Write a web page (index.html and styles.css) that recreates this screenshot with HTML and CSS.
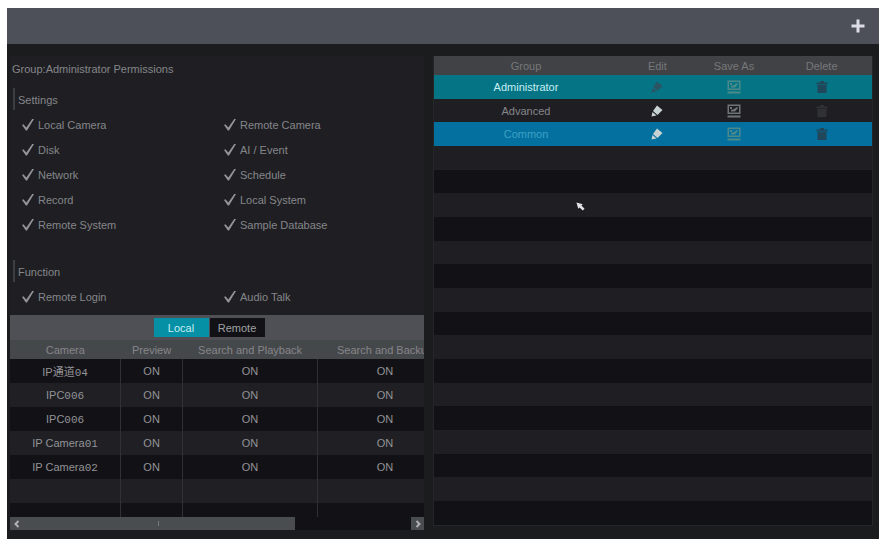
FILE: index.html
```html
<!DOCTYPE html>
<html lang="en">
<head>
    <meta charset="UTF-8">
    <meta name="viewport" content="width=device-width, initial-scale=1.0">
    <title>Permission Group</title>
    <link rel="stylesheet" href="styles.css">
</head>
<body>
    <svg class="sprite" aria-hidden="true">
        <symbol id="pencil" viewBox="0 0 12 12">
            <path d="M6 0.5 L11.5 5 L6.5 10 L2 6 Z"/>
            <path d="M1.5 7 L5.5 10.5 L0.5 11.5 Z"/>
        </symbol>
        <symbol id="save" viewBox="0 0 14 14">
            <path d="M0.5 0.5 H13.5 V10 H0.5 Z M2 2 V8.500 H12 V2 Z" fill-rule="evenodd"/>
            <path d="M3 3 H5 V5 H3 Z M4 7.500 V6 L7 5 L10 3 L11 4 L8 7.500 Z M0.5 11.5 H13.5 V13.5 H0.5 Z"/>
        </symbol>
        <symbol id="trash" viewBox="0 0 12 12">
            <path d="M4 0 H8 V1.500 H11.500 V3.500 H0.5 V1.500 H4 Z M1.500 4 H10.500 V12 H1.500 Z"/>
        </symbol>
    </svg>

    <div class="screen">
        <header class="topbar">
            <button class="add" aria-label="Add group">
                <svg viewBox="0 0 14 14"><path d="M7 0.5 V13.500 M0.5 7 H13.500"/></svg>
            </button>
        </header>

        <main class="main">
            <section class="perms">
                <h1 class="title">Group:Administrator Permissions</h1>

                <h2 class="subtitle">Settings</h2>
                <div class="checks settings">
                    <label><input type="checkbox" checked>Local Camera</label>
                    <label><input type="checkbox" checked>Remote Camera</label>
                    <label><input type="checkbox" checked>Disk</label>
                    <label><input type="checkbox" checked>AI / Event</label>
                    <label><input type="checkbox" checked>Network</label>
                    <label><input type="checkbox" checked>Schedule</label>
                    <label><input type="checkbox" checked>Record</label>
                    <label><input type="checkbox" checked>Local System</label>
                    <label><input type="checkbox" checked>Remote System</label>
                    <label><input type="checkbox" checked>Sample Database</label>
                </div>

                <h2 class="subtitle">Function</h2>
                <div class="checks">
                    <label><input type="checkbox" checked>Remote Login</label>
                    <label><input type="checkbox" checked>Audio Talk</label>
                </div>

                <div class="tabs">
                    <button class="tab active">Local</button>
                    <button class="tab">Remote</button>
                </div>
                <div class="cameraBox">
                    <table class="cameras">
                        <thead>
                            <tr><th class="name">Camera</th><th class="preview">Preview</th><th>Search and Playback</th><th>Search and Backup</th></tr>
                        </thead>
                        <tbody>
                            <tr><td>IP通道<span class="num">04</span></td><td>ON</td><td>ON</td><td>ON</td></tr>
                            <tr><td>IPC<span class="num">006</span></td><td>ON</td><td>ON</td><td>ON</td></tr>
                            <tr><td>IPC<span class="num">006</span></td><td>ON</td><td>ON</td><td>ON</td></tr>
                            <tr><td>IP Camera<span class="num">01</span></td><td>ON</td><td>ON</td><td>ON</td></tr>
                            <tr><td>IP Camera<span class="num">02</span></td><td>ON</td><td>ON</td><td>ON</td></tr>
                            <tr><td></td><td></td><td></td><td></td></tr>
                            <tr><td></td><td></td><td></td><td></td></tr>
                        </tbody>
                    </table>
                </div>
                <div class="scrollbar">
                    <button class="arrow" aria-label="Scroll left"><svg viewBox="0 0 8 8"><path d="M5.500 1 L2.500 4 L5.500 7"/></svg></button>
                    <div class="track"><div class="thumb"></div></div>
                    <button class="arrow" aria-label="Scroll right"><svg viewBox="0 0 8 8"><path d="M2.500 1 L5.500 4 L2.500 7"/></svg></button>
                </div>
            </section>

            <section class="groupBox">
                <table class="groups">
                    <thead>
                        <tr><th class="group">Group</th><th class="edit">Edit</th><th class="save">Save As</th><th>Delete</th></tr>
                    </thead>
                    <tbody>
                        <tr class="selected">
                            <td>Administrator</td>
                            <td><button class="icon pencil off" aria-label="Edit"><svg><use href="#pencil"/></svg></button></td>
                            <td><button class="icon disk" aria-label="Save As"><svg><use href="#save"/></svg></button></td>
                            <td><button class="icon trash" aria-label="Delete"><svg><use href="#trash"/></svg></button></td>
                        </tr>
                        <tr>
                            <td>Advanced</td>
                            <td><button class="icon pencil" aria-label="Edit"><svg><use href="#pencil"/></svg></button></td>
                            <td><button class="icon disk" aria-label="Save As"><svg><use href="#save"/></svg></button></td>
                            <td><button class="icon trash" aria-label="Delete"><svg><use href="#trash"/></svg></button></td>
                        </tr>
                        <tr class="hovered">
                            <td>Common</td>
                            <td><button class="icon pencil" aria-label="Edit"><svg><use href="#pencil"/></svg></button></td>
                            <td><button class="icon disk" aria-label="Save As"><svg><use href="#save"/></svg></button></td>
                            <td><button class="icon trash" aria-label="Delete"><svg><use href="#trash"/></svg></button></td>
                        </tr>
                        <tr><td colspan="4"></td></tr>
                        <tr><td colspan="4"></td></tr>
                        <tr><td colspan="4"></td></tr>
                        <tr><td colspan="4"></td></tr>
                        <tr><td colspan="4"></td></tr>
                        <tr><td colspan="4"></td></tr>
                        <tr><td colspan="4"></td></tr>
                        <tr><td colspan="4"></td></tr>
                        <tr><td colspan="4"></td></tr>
                        <tr><td colspan="4"></td></tr>
                        <tr><td colspan="4"></td></tr>
                        <tr><td colspan="4"></td></tr>
                        <tr><td colspan="4"></td></tr>
                        <tr><td colspan="4"></td></tr>
                        <tr><td colspan="4"></td></tr>
                        <tr><td colspan="4"></td></tr>
                    </tbody>
                </table>
                <svg class="cursor" viewBox="0 0 10 10"><path d="M0.500 0.500 L7.500 2.500 L6 4 L9.500 7.500 L7.500 9.500 L4 6 L2.500 7.500 Z"/></svg>
            </section>
        </main>
    </div>
</body>
</html>
```

FILE: styles.css
```css
*{
    padding: 0;
    margin: 0;
    box-sizing: border-box;
}
body{
    height: 100vh;
    padding: 8px 3px 0 7px;
    background-color: #fff;
    font-family: "Liberation Sans", "Noto Sans CJK SC", sans-serif;
    font-size: 11px;
    color: #85868a;
}
button{
    border: 0;
    background: none;
    font: inherit;
    color: inherit;
    cursor: pointer;
}
table{
    border-collapse: collapse;
    table-layout: fixed;
}
th{
    font-weight: normal;
}
td{
    text-align: center;
}
.sprite{
    display: none;
}
.screen{
    height: 100%;
    display: flex;
    flex-direction: column;
    background-color: #1b1c1e;
}
.topbar{
    height: 36px;
    padding-right: 14px;
    display: flex;
    justify-content: flex-end;
    align-items: center;
    background-color: #4d5058;
}
.add{
    width: 14px;
    height: 14px;
}
.add svg{
    display: block;
    fill: none;
    stroke: #dcdde4;
    stroke-width: 3;
}
.main{
    flex: 1;
    min-height: 0;
    padding: 12px 6px 9px 3px;
    display: flex;
    gap: 9px;
}

/* left side */
.perms{
    flex: 415;
    min-width: 0;
    display: flex;
    flex-direction: column;
    background-color: #1f1f23;
}
.title{
    height: 32px;
    padding-left: 2px;
    font-size: 11px;
    font-weight: normal;
    line-height: 26px;
}
.subtitle{
    height: 22px;
    margin-left: 3px;
    padding-left: 3px;
    border-left: 2px solid #3c3e41;
    font-size: 11px;
    font-weight: normal;
    line-height: 24px;
}
.checks{
    padding: 2px 0 6px 12px;
    display: grid;
    grid-template-columns: 202px 1fr;
    grid-auto-rows: 25px;
}
.settings{
    padding-bottom: 23px;
}
.checks label{
    display: flex;
    align-items: center;
    gap: 4px;
}
.checks input{
    appearance: none;
    width: 12px;
    height: 12px;
}
.checks input:checked{
    background-color: #929397;
    clip-path: polygon(0 55%, 12% 48%, 36% 74%, 88% 0, 100% 5%, 42% 100%, 32% 100%);
}
.tabs{
    height: 25px;
    padding-right: 16px;
    display: flex;
    justify-content: center;
    align-items: center;
    gap: 1px;
    background-color: #4f5055;
}
.tab{
    width: 55px;
    height: 19px;
    background-color: #121216;
    color: #a0a0a4;
}
.tab.active{
    background-color: #0590a5;
    color: #c8eef2;
}
.cameraBox{
    flex: 1;
    min-height: 0;
    overflow: hidden;
}
.cameras{
    width: 107%;
}
.cameras .name{
    width: 25%;
}
.cameras .preview{
    width: 14%;
}
.cameras th{
    height: 19px;
    background-color: #45484b;
    white-space: nowrap;
}
.cameras td{
    height: 24px;
    border-right: 1px solid #303134;
    color: #929397;
}
.cameras tbody tr:nth-child(odd){
    background-color: #121216;
}
.cameras tbody tr:nth-child(even){
    background-color: #1f1f24;
}
.num{
    font-family: "Liberation Mono", monospace;
}
.scrollbar{
    height: 13px;
    display: flex;
    background-color: #121216;
}
.arrow{
    width: 13px;
    display: flex;
    justify-content: center;
    align-items: center;
    background-color: #4a4d50;
}
.arrow svg{
    width: 8px;
    height: 8px;
    fill: none;
    stroke: #b0b1b4;
    stroke-width: 2;
}
.track{
    flex: 1;
}
.thumb{
    width: 70%;
    height: 13px;
    background: linear-gradient(#77797c, #77797c) center / 1px 5px no-repeat #4a4d50;
}

/* right side */
.groupBox{
    flex: 439;
    position: relative;
    margin-bottom: 4px;
    border: 1px solid #242627;
    border-width: 0 1px 1px;
}
.groups{
    width: 100%;
    height: 100%;
}
.groups .group{
    width: 42%;
}
.groups .edit{
    width: 18%;
}
.groups .save{
    width: 17%;
}
.groups th{
    height: 19px;
    background-color: #414245;
    color: #77787b;
}
.groups td{
    height: 23px;
}
.groups tbody tr:nth-child(odd){
    background-color: #121216;
}
.groups tbody tr:nth-child(even){
    background-color: #1f1f23;
}
.groups tbody tr.selected{
    background-color: #057586;
    color: #c8eef2;
}
.groups tbody tr.hovered{
    background-color: #0370a0;
    color: #3fa0c4;
}
.icon{
    display: block;
    width: 12px;
    height: 12px;
    margin: 0 auto;
}
.icon svg{
    display: block;
    width: 100%;
    height: 100%;
    fill: currentColor;
}
.pencil{
    color: #c9d2d2;
}
.pencil.off{
    color: #2b5563;
}
.disk{
    width: 14px;
    height: 14px;
    color: #6f7574;
}
.selected .disk, .hovered .disk{
    color: #4c8a8a;
}
.trash{
    color: #303134;
}
.selected .trash, .hovered .trash{
    color: #20485a;
}
.cursor{
    width: 9px;
    height: 9px;
    position: absolute;
    left: 142px;
    top: 146px;
    fill: #e4e4e8;
}
```
